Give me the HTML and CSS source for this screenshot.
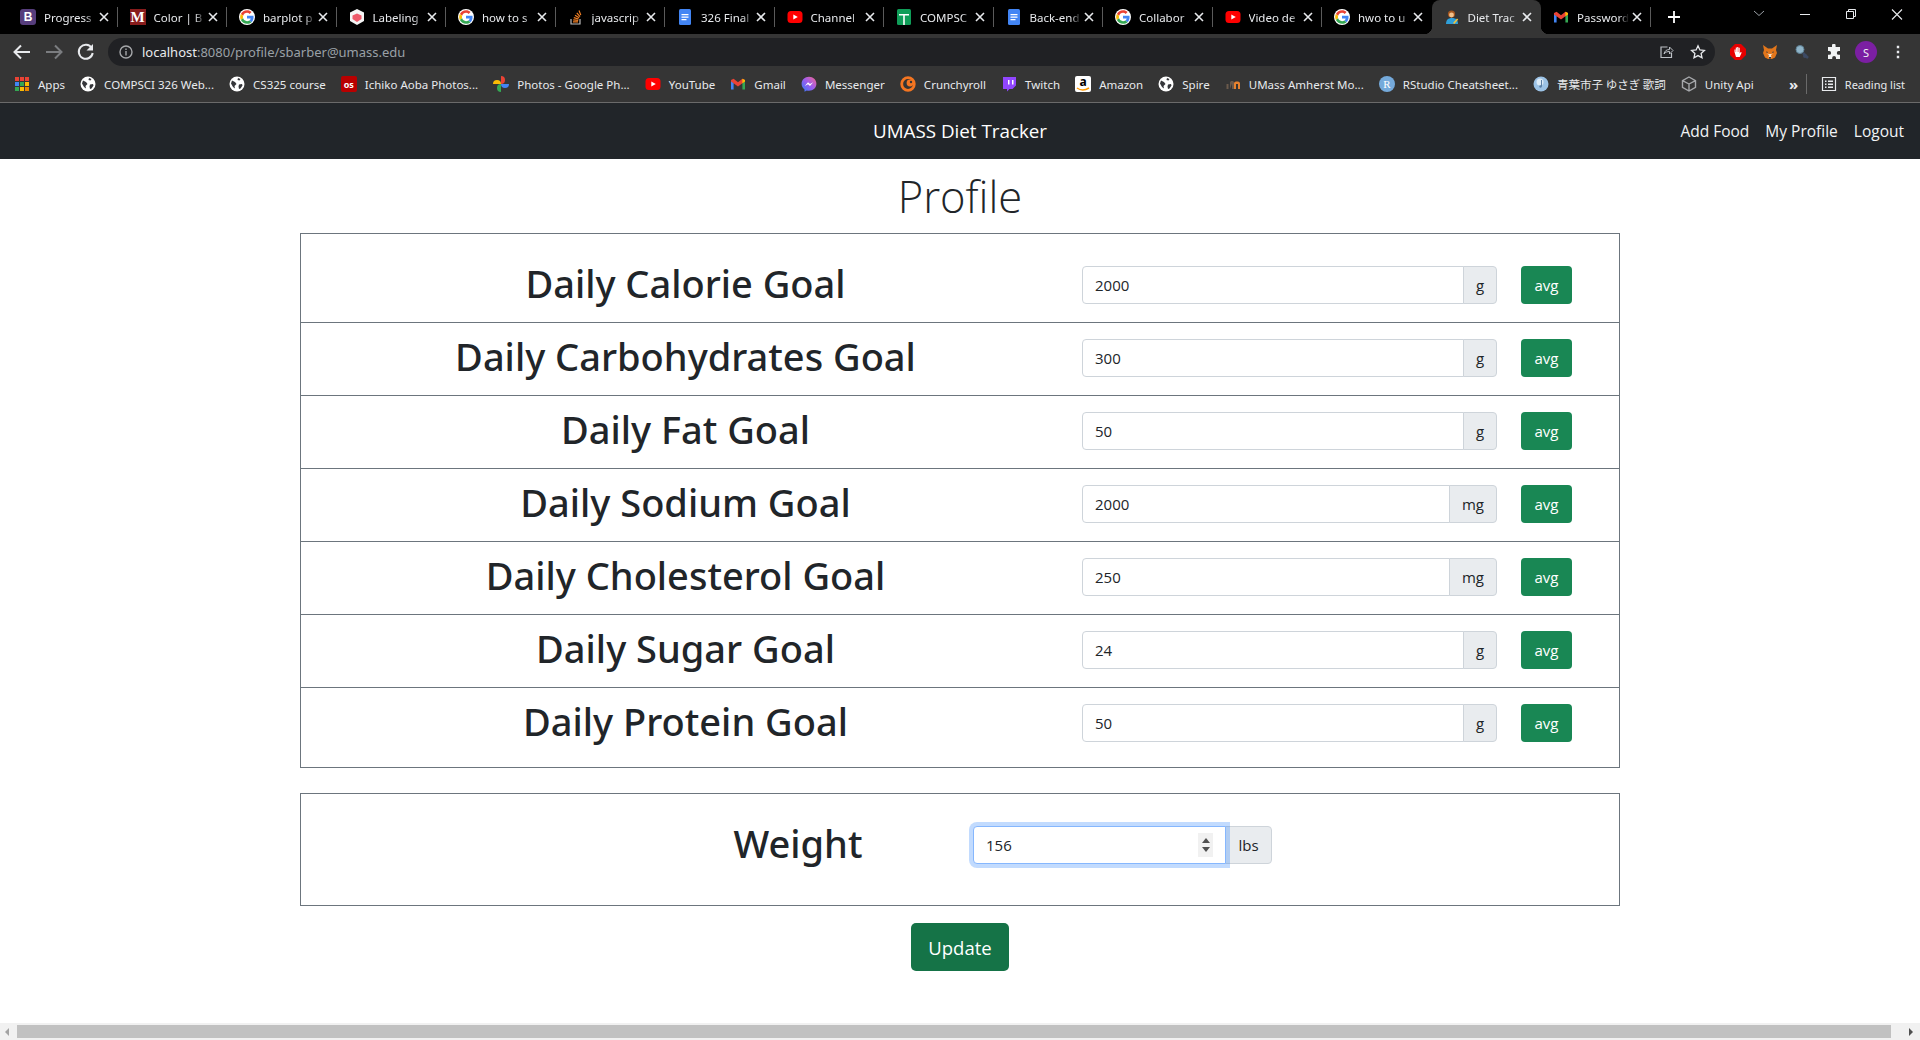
FILE: index.html
```html
<!DOCTYPE html>
<html lang="en">
<head>
    <meta charset="UTF-8">
    <meta name="viewport" content="width=device-width, initial-scale=1.0">
    <title>Diet Tracker</title>
    <link rel="stylesheet" href="styles.css">
</head>
<body>

    <svg class="defs" width="0" height="0">
        <symbol id="google" viewBox="-4 -4 56 56">
            <circle cx="24" cy="24" r="28" fill="#fff"/>
            <path fill="#EA4335" d="M24 9.5c3.54 0 6.71 1.22 9.21 3.6l6.85-6.85C35.9 2.38 30.47 0 24 0 14.62 0 6.51 5.38 2.56 13.22l7.98 6.19C12.43 13.72 17.74 9.5 24 9.5z"/>
            <path fill="#4285F4" d="M46.98 24.55c0-1.57-.15-3.09-.38-4.55H24v9.02h12.94c-.58 2.96-2.26 5.48-4.78 7.18l7.73 6c4.51-4.18 7.09-10.36 7.09-17.65z"/>
            <path fill="#FBBC05" d="M10.53 28.59c-.48-1.45-.76-2.99-.76-4.59s.27-3.14.76-4.59l-7.98-6.19C.92 16.46 0 20.12 0 24c0 3.88.92 7.54 2.56 10.78l7.97-6.19z"/>
            <path fill="#34A853" d="M24 48c6.48 0 11.93-2.13 15.89-5.81l-7.73-6c-2.15 1.45-4.92 2.3-8.16 2.3-6.26 0-11.57-4.22-13.47-9.91l-7.98 6.19C6.51 42.62 14.62 48 24 48z"/>
        </symbol>
        <symbol id="youtube" viewBox="0 0 16 16">
            <rect x="0.5" y="2" width="15" height="12" rx="3.5" fill="#f00"/>
            <path d="M6.3 5.4 10.8 8l-4.5 2.6z" fill="#fff"/>
        </symbol>
        <symbol id="docs" viewBox="0 0 16 16">
            <rect x="2" y="0" width="12" height="16" rx="1.5" fill="#4285f4"/>
            <path d="M4.5 5h7v1.2h-7zM4.5 7.5h7v1.2h-7zM4.5 10h5v1.2h-5z" fill="#fff"/>
        </symbol>
        <symbol id="globe" viewBox="0 0 16 16">
            <circle cx="8" cy="8" r="7.5" fill="#fff"/>
            <path d="M3 4.500 6 6l1.500 2L5.500 10 6 12.500 4 11 2 7.500zM9 2l2.500 1-1 1.500L8.500 4zM10 8.500l3-.5.500 1.500-2 3-1.500.5-.5-2.500z" fill="#35363a"/>
        </symbol>
        <symbol id="gmail" viewBox="0 0 16 16">
            <path d="M1 4v9.5h2.6V7.2z" fill="#4285f4"/>
            <path d="M15 4v9.5h-2.6V7.2z" fill="#34a853"/>
            <path d="M1 4 3.6 2.8 8 6.2l4.4-3.4L15 4v1.5L12.4 7.2 8 10.4 3.6 7.2 1 5.5z" fill="#ea4335"/>
            <path d="M12.4 2.8 15 4v1.5l-2.6 1.7z" fill="#fbbc05"/>
        </symbol>
        <symbol id="close" viewBox="0 0 16 16">
            <path d="M4 4l8 8M12 4l-8 8" stroke="#e8eaed" stroke-width="1.6" fill="none"/>
        </symbol>
    </svg>

    <div class="tabstrip">
        <div class="tab">
            <span class="fav fav-b">B</span>
            <span class="tab-title">Progress</span>
            <svg class="tab-close"><use href="#close"/></svg>
        </div>
        <div class="tab">
            <span class="fav fav-m">M</span>
            <span class="tab-title">Color | B</span>
            <svg class="tab-close"><use href="#close"/></svg>
        </div>
        <div class="tab">
            <svg class="fav"><use href="#google"/></svg>
            <span class="tab-title">barplot p</span>
            <svg class="tab-close"><use href="#close"/></svg>
        </div>
        <div class="tab">
            <svg class="fav" viewBox="0 0 16 16">
                <path d="M8 0 15 3.5V12L8 16 1 12V3.5z" fill="#f5f5f5"/>
                <path d="M8 4.5 12.5 6.5V10L8 13 3.5 10V6.5z" fill="#ee5a6a"/>
            </svg>
            <span class="tab-title">Labeling</span>
            <svg class="tab-close"><use href="#close"/></svg>
        </div>
        <div class="tab">
            <svg class="fav"><use href="#google"/></svg>
            <span class="tab-title">how to s</span>
            <svg class="tab-close"><use href="#close"/></svg>
        </div>
        <div class="tab">
            <svg class="fav" viewBox="0 0 16 16">
                <path d="M3 10v5h9v-5" stroke="#bcbbbb" stroke-width="1.2" fill="none"/>
                <path d="M5 12.8h5M5.2 10.8l5 .5M5.8 8.6l4.8 1.4M7 6.2l4.2 2.6M8.8 3.8l3.2 3.8M11 1.5l1.8 4.6" stroke="#f48024" stroke-width="1.2" fill="none"/>
            </svg>
            <span class="tab-title">javascrip</span>
            <svg class="tab-close"><use href="#close"/></svg>
        </div>
        <div class="tab">
            <svg class="fav"><use href="#docs"/></svg>
            <span class="tab-title">326 Final</span>
            <svg class="tab-close"><use href="#close"/></svg>
        </div>
        <div class="tab">
            <svg class="fav"><use href="#youtube"/></svg>
            <span class="tab-title">Channel</span>
            <svg class="tab-close"><use href="#close"/></svg>
        </div>
        <div class="tab">
            <svg class="fav" viewBox="0 0 16 16">
                <rect x="1" y="0" width="14" height="16" rx="1.5" fill="#0f9d58"/>
                <path d="M3 5h10v1.400H8.800V16H7.200V6.400H3z" fill="#fff"/>
            </svg>
            <span class="tab-title">COMPSC</span>
            <svg class="tab-close"><use href="#close"/></svg>
        </div>
        <div class="tab">
            <svg class="fav"><use href="#docs"/></svg>
            <span class="tab-title">Back-end</span>
            <svg class="tab-close"><use href="#close"/></svg>
        </div>
        <div class="tab">
            <svg class="fav"><use href="#google"/></svg>
            <span class="tab-title">Collabor</span>
            <svg class="tab-close"><use href="#close"/></svg>
        </div>
        <div class="tab">
            <svg class="fav"><use href="#youtube"/></svg>
            <span class="tab-title">Video de</span>
            <svg class="tab-close"><use href="#close"/></svg>
        </div>
        <div class="tab tab-noline">
            <svg class="fav"><use href="#google"/></svg>
            <span class="tab-title">hwo to u</span>
            <svg class="tab-close"><use href="#close"/></svg>
        </div>
        <div class="tab tab-active">
            <svg class="fav" viewBox="0 0 16 16">
                <path d="M2 15c0-4 2-6 6-6s6 2 6 6z" fill="#2f9fd8"/>
                <circle cx="7.5" cy="5" r="3.6" fill="#a5561f"/>
                <circle cx="7.5" cy="6" r="2.4" fill="#f3c18b"/>
                <path d="M9 14l4-4.5 1.2 1-4 4.5z" fill="#f5c33b"/>
            </svg>
            <span class="tab-title">Diet Trac</span>
            <svg class="tab-close"><use href="#close"/></svg>
        </div>
        <div class="tab">
            <svg class="fav"><use href="#gmail"/></svg>
            <span class="tab-title">Password</span>
            <svg class="tab-close"><use href="#close"/></svg>
        </div>
        <svg class="newtab" viewBox="0 0 16 16"><path d="M8 2v12M2 8h12" stroke="#fff" stroke-width="1.8"/></svg>
        <div class="window-controls">
            <svg class="win-btn" viewBox="0 0 46 16"><path d="M18 5l5 4.5L28 5" stroke="#9aa0a6" fill="none"/></svg>
            <svg class="win-btn" viewBox="0 0 46 16"><path d="M18 8.5h10" stroke="#e8eaed"/></svg>
            <svg class="win-btn" viewBox="0 0 46 16"><path d="M18.5 5.5h7v7h-7zM20.5 5.5v-2h7v7h-2" stroke="#e8eaed" fill="none"/></svg>
            <svg class="win-btn" viewBox="0 0 46 16"><path d="M18 3.5l10 10M28 3.5l-10 10" stroke="#e8eaed" stroke-width="1.1"/></svg>
        </div>
    </div>

    <div class="toolbar">
        <svg class="tool" viewBox="0 0 32 32"><path d="M24 16H9M15 9.500 8.500 16l6.500 6.500" stroke="#e8eaed" stroke-width="2" fill="none"/></svg>
        <svg class="tool" viewBox="0 0 32 32"><path d="M8 16h15M17 9.500l6.500 6.500-6.500 6.500" stroke="#7b7d80" stroke-width="2" fill="none"/></svg>
        <svg class="tool" viewBox="0 0 32 32"><path d="M21.700 12a7 7 0 1 0 1 5" stroke="#e8eaed" stroke-width="2" fill="none"/><path d="M23 8v6.500h-6.500z" fill="#e8eaed"/></svg>
        <div class="address">
            <svg class="info" viewBox="0 0 16 16">
                <circle cx="8" cy="8" r="6" stroke="#a6a8ab" stroke-width="1.400" fill="none"/>
                <path d="M7.300 7h1.400v4.500H7.300zM7.300 4.500h1.400v1.400H7.300z" fill="#a6a8ab"/>
            </svg>
            <span class="url"><span class="url-host">localhost</span>:8080/profile/sbarber@umass.edu</span>
            <svg class="addr-icon addr-share" viewBox="0 0 16 16">
                <path d="M9.500 3H3v10.500h10.500V9" stroke="#bdc1c6" stroke-width="1.200" fill="none"/>
                <path d="M6 10c.5-3 2.500-4.500 5.500-4.500V3L15 6.500 11.500 10V7.500C9.500 7.500 7.500 8 6 10z" stroke="#bdc1c6" fill="#202124"/>
            </svg>
            <svg class="addr-icon addr-star" viewBox="0 0 16 16">
                <path d="M8 1.800l1.900 4.100 4.500.5-3.300 3 .9 4.400L8 11.600l-4 2.200.9-4.400-3.300-3 4.500-.5z" stroke="#e8eaed" stroke-width="1.300" fill="none"/>
            </svg>
        </div>
        <div class="extensions">
            <svg class="ext" viewBox="0 0 16 16">
                <path d="M5 0h6l5 5v6l-5 5H5l-5-5V5z" fill="#e60000"/>
                <path d="M4.500 8V5.500h1V8h.3V3.500h1.100V8h.3V3h1.100v5h.3V3.800h1.100v5.700l1-1.500 1 .6-2 4.400H6z" fill="#fff"/>
            </svg>
            <svg class="ext" viewBox="0 0 16 16">
                <path d="M1 1l5 3.500h4L15 1l-1 5 1 3-2 4.500-3 1.500H6l-3-1.500L1 9l1-3z" fill="#e2761b"/>
                <path d="M5 9.500 7 11l-.5 2.500H9.500L9 11l2-1.500-2 .5H7z" fill="#f6e0c8"/>
                <path d="M4 7.500l2 .5-1 1zM12 7.500 10 8l1 1zM7 13h2v1.500H7z" fill="#233447"/>
            </svg>
            <svg class="ext" viewBox="0 0 16 16">
                <circle cx="6" cy="5.500" r="4" fill="#8fb4c8" stroke="#5e7f92"/>
                <path d="M9 9l5 5" stroke="#3d4a63" stroke-width="2.500"/>
                <circle cx="11" cy="12" r="2" fill="#3d4a63"/>
            </svg>
            <svg class="ext" viewBox="0 0 16 16">
                <path d="M6 1.500a1.800 1.800 0 0 1 3.600 0V3H14v4h-1.300a1.900 1.900 0 0 0 0 3.800H14V15H10v-1.200a1.900 1.900 0 0 0-3.800 0V15H2v-4.200h1.200a1.900 1.900 0 0 0 0-3.800H2V3h4z" fill="#f1f3f4"/>
            </svg>
            <span class="avatar">S</span>
            <svg class="ext" viewBox="0 0 16 16"><path d="M6.800 1.800h2.400v2.400H6.800zM6.800 6.800h2.400v2.400H6.800zM6.800 11.800h2.400v2.400H6.800z" fill="#e8eaed"/></svg>
        </div>
    </div>

    <div class="bookmarks">
        <div class="bm bm-apps">
            <svg class="bm-icon" viewBox="0 0 16 16">
                <path d="M1 1h4v4H1z" fill="#ea4335"/><path d="M6 1h4v4H6z" fill="#ea4335"/><path d="M11 1h4v4h-4z" fill="#ea4335"/>
                <path d="M1 6h4v4H1z" fill="#4285f4"/><path d="M6 6h4v4H6z" fill="#34a853"/><path d="M11 6h4v4h-4z" fill="#fbbc05"/>
                <path d="M1 11h4v4H1z" fill="#34a853"/><path d="M6 11h4v4H6z" fill="#fbbc05"/><path d="M11 11h4v4h-4z" fill="#ea8600"/>
            </svg>
            Apps
        </div>
        <div class="bm"><svg class="bm-icon"><use href="#globe"/></svg>COMPSCI 326 Web...</div>
        <div class="bm"><svg class="bm-icon"><use href="#globe"/></svg>CS325 course</div>
        <div class="bm"><span class="bm-icon bm-os">os</span>Ichiko Aoba Photos...</div>
        <div class="bm">
            <svg class="bm-icon" viewBox="0 0 16 16">
                <path d="M8 8V0a4 4 0 0 1 0 8z" fill="#ea4335"/>
                <path d="M8 8V0a4 4 0 0 1 0 8z" fill="#4285f4" transform="rotate(90 8 8)"/>
                <path d="M8 8V0a4 4 0 0 1 0 8z" fill="#34a853" transform="rotate(180 8 8)"/>
                <path d="M8 8V0a4 4 0 0 1 0 8z" fill="#fbbc05" transform="rotate(270 8 8)"/>
            </svg>
            Photos - Google Ph...
        </div>
        <div class="bm"><svg class="bm-icon"><use href="#youtube"/></svg>YouTube</div>
        <div class="bm"><svg class="bm-icon"><use href="#gmail"/></svg>Gmail</div>
        <div class="bm">
            <svg class="bm-icon" viewBox="0 0 16 16">
                <defs>
                    <linearGradient id="mess" x1="0" y1="1" x2="1" y2="0">
                        <stop offset="0" stop-color="#2f7cf6"/>
                        <stop offset="0.5" stop-color="#9b5cf0"/>
                        <stop offset="1" stop-color="#f4668c"/>
                    </linearGradient>
                </defs>
                <path d="M8 .8c4.200 0 7.400 3 7.400 7s-3.200 7-7.400 7c-.8 0-1.500-.1-2.200-.3L3.500 15.800v-2.300C1.700 12.200.6 10.200.6 7.800.6 3.800 3.800.8 8 .8z" fill="url(#mess)"/>
                <path d="M3.800 10 7 6.300l2 1.700 3.200-1.700L9 10 7 8.300z" fill="#fff"/>
            </svg>
            Messenger
        </div>
        <div class="bm">
            <svg class="bm-icon" viewBox="0 0 16 16">
                <circle cx="8" cy="8" r="6.300" fill="none" stroke="#f47521" stroke-width="2.800"/>
                <circle cx="10" cy="7" r="3.400" fill="#f47521"/>
                <circle cx="11" cy="6" r="1.200" fill="#35363a"/>
            </svg>
            Crunchyroll
        </div>
        <div class="bm">
            <svg class="bm-icon" viewBox="0 0 16 16">
                <path d="M2 1h13v8.500L11.500 13H8.500L6 15.500V13H2z" fill="#9146ff"/>
                <path d="M7 4h1.500v4.500H7zM11 4h1.500v4.500H11z" fill="#fff"/>
            </svg>
            Twitch
        </div>
        <div class="bm">
            <span class="bm-icon bm-amazon">a
                <svg class="smile" viewBox="0 0 16 5"><path d="M2 1c3.500 2.500 8 2.500 12 0" stroke="#f90" stroke-width="1.500" fill="none"/></svg>
            </span>
            Amazon
        </div>
        <div class="bm"><svg class="bm-icon"><use href="#globe"/></svg>Spire</div>
        <div class="bm">
            <svg class="bm-icon" viewBox="0 0 16 16">
                <path d="M1.500 13V8h2v5zM5 13V6.500C5 5.500 6 5 7 5s2 .5 2 1.500V13H7V7.500H7z" fill="#6b5a4c"/>
                <path d="M9 13V7.500C9 6 10.500 5.500 12 5.500s3 .5 3 2V13h-2V8h-2v5z" fill="#e8822e"/>
            </svg>
            UMass Amherst Mo...
        </div>
        <div class="bm"><span class="bm-icon bm-r">R</span>RStudio Cheatsheet...</div>
        <div class="bm">
            <svg class="bm-icon" viewBox="0 0 16 16">
                <circle cx="8" cy="8" r="7.500" fill="#9cc3e6"/>
                <circle cx="7" cy="6" r="3.500" fill="#dcebf7"/>
                <path d="M8.500 4v6.500" stroke="#5a7fa5"/>
                <circle cx="7.500" cy="10.500" r="1.200" fill="#5a7fa5"/>
            </svg>
            <span class="cjk">青葉市子 ゆさぎ 歌詞</span>
        </div>
        <div class="bm">
            <svg class="bm-icon" viewBox="0 0 16 16">
                <path d="M8 1 14.500 4.700v6.600L8 15l-6.500-3.700V4.700zM8 8l6.500-3.300M8 8 1.500 4.700M8 8v7" stroke="#a6a8ab" stroke-width="1.400" fill="none"/>
            </svg>
            Unity Api
        </div>
        <div class="bm-right">
            <span class="bm-more">»</span>
            <span class="bm-sep"></span>
            <div class="bm bm-reading">
                <svg class="bm-icon" viewBox="0 0 16 16">
                    <path d="M1.500 1.500h13v13h-13z" stroke="#e8eaed" stroke-width="1.200" fill="none"/>
                    <path d="M4 4.500h1.500V6H4zM7 4.500h5V6H7zM4 7.500h1.500V9H4zM7 7.500h5V9H7zM4 10.500h1.500V12H4zM7 10.500h5V12H7z" fill="#e8eaed"/>
                </svg>
                Reading list
            </div>
        </div>
    </div>

    <nav class="navbar">
        <span></span>
        <a class="brand">UMASS Diet Tracker</a>
        <div class="nav-links">
            <a class="nav-link">Add Food</a>
            <a class="nav-link">My Profile</a>
            <a class="nav-link">Logout</a>
        </div>
    </nav>

    <main class="content">
        <h1 class="title">Profile</h1>

        <div class="goals">
            <div class="goal-row">
                <h2 class="goal-name">Daily Calorie Goal</h2>
                <div class="input-group">
                    <input class="form-control" type="text" value="2000">
                    <span class="unit unit-g">g</span>
                </div>
                <button class="btn-avg">avg</button>
            </div>
            <div class="goal-row">
                <h2 class="goal-name">Daily Carbohydrates Goal</h2>
                <div class="input-group">
                    <input class="form-control" type="text" value="300">
                    <span class="unit unit-g">g</span>
                </div>
                <button class="btn-avg">avg</button>
            </div>
            <div class="goal-row">
                <h2 class="goal-name">Daily Fat Goal</h2>
                <div class="input-group">
                    <input class="form-control" type="text" value="50">
                    <span class="unit unit-g">g</span>
                </div>
                <button class="btn-avg">avg</button>
            </div>
            <div class="goal-row">
                <h2 class="goal-name">Daily Sodium Goal</h2>
                <div class="input-group">
                    <input class="form-control" type="text" value="2000">
                    <span class="unit unit-mg">mg</span>
                </div>
                <button class="btn-avg">avg</button>
            </div>
            <div class="goal-row">
                <h2 class="goal-name">Daily Cholesterol Goal</h2>
                <div class="input-group">
                    <input class="form-control" type="text" value="250">
                    <span class="unit unit-mg">mg</span>
                </div>
                <button class="btn-avg">avg</button>
            </div>
            <div class="goal-row">
                <h2 class="goal-name">Daily Sugar Goal</h2>
                <div class="input-group">
                    <input class="form-control" type="text" value="24">
                    <span class="unit unit-g">g</span>
                </div>
                <button class="btn-avg">avg</button>
            </div>
            <div class="goal-row">
                <h2 class="goal-name">Daily Protein Goal</h2>
                <div class="input-group">
                    <input class="form-control" type="text" value="50">
                    <span class="unit unit-g">g</span>
                </div>
                <button class="btn-avg">avg</button>
            </div>
        </div>

        <div class="weight-box">
            <h2 class="weight-name">Weight</h2>
            <div class="weight-group">
                <div class="weight-field">
                    <input class="form-control focused" type="text" value="156">
                    <span class="spinner">
                        <i class="spin-up"></i>
                        <i class="spin-down"></i>
                    </span>
                </div>
                <span class="unit unit-lbs">lbs</span>
            </div>
        </div>

        <div class="actions">
            <button class="btn-update">Update</button>
        </div>
    </main>

    <div class="h-scroll">
        <i class="arrow-left"></i>
        <div class="thumb"></div>
        <i class="arrow-right"></i>
    </div>

</body>
</html>
```

FILE: styles.css
```css
* {
    box-sizing: border-box;
}

body {
    margin: 0;
    height: 100vh;
    overflow: hidden;
    display: flex;
    flex-direction: column;
    background: #fff;
    color: #212529;
    font-family: "Open Sans", "Noto Sans", sans-serif;
}

.defs {
    position: absolute;
}

/* browser chrome */
.tabstrip {
    display: flex;
    align-items: center;
    flex: none;
    height: 34px;
    padding-left: 8px;
    background: #000;
    font-family: "Noto Sans", sans-serif;
    font-size: 11.5px;
    color: #e8eaed;
}

.tab {
    position: relative;
    display: flex;
    align-items: center;
    flex: none;
    width: 109.5px;
    height: 34px;
    padding: 0 6px 0 12px;
}

.tab::after {
    content: "";
    position: absolute;
    right: 0;
    top: 7px;
    height: 20px;
    width: 1px;
    background: #5a5a5a;
}

.tab-noline::after {
    display: none;
}

.tab-active {
    background: #353535;
    border-radius: 8px 8px 0 0;
}

.tab-active::before,
.tab-active::after {
    content: "";
    position: absolute;
    top: auto;
    bottom: 0;
    width: 8px;
    height: 8px;
}

.tab-active::before {
    left: -8px;
    background: radial-gradient(circle at 0 0, transparent 8px, #353535 8.5px);
}

.tab-active::after {
    right: -8px;
    background: radial-gradient(circle at 100% 0, transparent 8px, #353535 8.5px);
}

.fav {
    flex: none;
    width: 16px;
    height: 16px;
}

.fav-b {
    display: flex;
    align-items: center;
    justify-content: center;
    border-radius: 3px;
    background: #563d7c;
    color: #fff;
    font-family: "Liberation Sans", sans-serif;
    font-weight: bold;
    font-size: 12px;
}

.fav-m {
    display: flex;
    align-items: center;
    justify-content: center;
    background: #881c1c;
    color: #fff;
    font-family: "Liberation Serif", serif;
    font-weight: bold;
    font-size: 15px;
}

.tab-title {
    flex: 1;
    min-width: 0;
    margin-left: 8px;
    white-space: nowrap;
    overflow: hidden;
    -webkit-mask-image: linear-gradient(to right, #000 80%, transparent 100%);
    mask-image: linear-gradient(to right, #000 80%, transparent 100%);
}

.tab-close {
    flex: none;
    width: 16px;
    height: 16px;
}

.newtab {
    flex: none;
    width: 16px;
    height: 16px;
    margin-left: 15px;
}

.window-controls {
    display: flex;
    margin-left: auto;
}

.win-btn {
    width: 46px;
    height: 16px;
    margin-bottom: 6px;
}

.toolbar {
    display: flex;
    align-items: center;
    flex: none;
    height: 34px;
    padding: 2px 6px 0 6px;
    background: #353535;
}

.tool {
    flex: none;
    width: 32px;
    height: 32px;
}

.address {
    display: flex;
    align-items: center;
    flex: 1;
    height: 28px;
    margin: 0 7px 0 6px;
    padding-left: 10px;
    border-radius: 14px;
    background: #202124;
    font-family: "Noto Sans", sans-serif;
    font-size: 13px;
    color: #9aa0a6;
}

.info {
    flex: none;
    width: 16px;
    height: 16px;
}

.url {
    flex: 1;
    margin-left: 8px;
}

.url-host {
    color: #e8eaed;
}

.addr-icon {
    flex: none;
    width: 16px;
    height: 16px;
}

.addr-star {
    margin: 0 9px 0 16px;
}

.extensions {
    display: flex;
    align-items: center;
}

.ext {
    flex: none;
    width: 32px;
    height: 16px;
}

.avatar {
    display: flex;
    align-items: center;
    justify-content: center;
    width: 22px;
    height: 22px;
    margin: 0 5px;
    border-radius: 50%;
    background: #7b1fa2;
    color: #f1f3f4;
    font-family: "Noto Sans", sans-serif;
    font-size: 11px;
}

.bookmarks {
    display: flex;
    align-items: center;
    flex: none;
    height: 35px;
    padding: 0 0 2px 7px;
    background: #353535;
    border-bottom: 1px solid #6a6a6a;
    font-family: "Noto Sans", sans-serif;
    font-size: 11.5px;
    color: #e8eaed;
    white-space: nowrap;
}

.bm {
    display: flex;
    align-items: center;
    flex: none;
    padding: 0 9.1px 0 6px;
}

.bm-apps {
    padding-left: 7px;
}

.bm-icon {
    flex: none;
    width: 16px;
    height: 16px;
    margin-right: 8px;
}

.bm-os {
    display: flex;
    align-items: center;
    justify-content: center;
    border-radius: 2px;
    background: #b90000;
    color: #fff;
    font-size: 9px;
    font-weight: 700;
    line-height: 1;
}

.bm-amazon {
    position: relative;
    display: flex;
    justify-content: center;
    border-radius: 2px;
    background: #fff;
    color: #000;
    font-size: 12px;
    font-weight: 700;
    line-height: 12px;
}

.smile {
    position: absolute;
    left: 0;
    bottom: 0;
    width: 16px;
    height: 5px;
}

.bm-r {
    display: flex;
    align-items: center;
    justify-content: center;
    border-radius: 50%;
    background: #75aadb;
    color: #fff;
    font-family: "Liberation Serif", serif;
    font-size: 11px;
}

.cjk {
    font-family: "Noto Sans CJK JP", sans-serif;
}

.bm-right {
    display: flex;
    align-items: center;
    margin-left: auto;
}

.bm-more {
    font-size: 15px;
    font-weight: 700;
    line-height: 1;
}

.bm-sep {
    width: 1px;
    height: 20px;
    margin: 0 7.5px 0 8px;
    background: #6a6a6a;
}

.bm-reading {
    padding-right: 15px;
    font-size: 11px;
}

/* site navbar */
.navbar {
    display: grid;
    grid-template-columns: 1fr auto 1fr;
    align-items: center;
    flex: none;
    height: 56px;
    padding: 0 16px;
    background: #212529;
    color: #f8f9fa;
}

.brand {
    font-size: 18.800px;
    color: #fff;
}

.nav-links {
    display: flex;
    justify-content: flex-end;
    gap: 16px;
}

.nav-link {
    font-size: 15.500px;
    color: #f1f3f5;
}

.content {
    flex: 1;
    min-height: 0;
    padding: 0 300px;
}

.title {
    margin: 0;
    height: 74px;
    padding-top: 9px;
    font-size: 43.500px;
    font-weight: 300;
    line-height: 58px;
    text-align: center;
}

.goals {
    padding: 16px 0 7px;
    border: 1px solid #6c757d;
}

.goal-row {
    display: grid;
    grid-template-columns: 769px 439px 1fr;
    height: 73px;
    padding-top: 16px;
    border-bottom: 1px solid #6c757d;
}

.goal-row:last-child {
    height: 72px;
    border-bottom: none;
}

.goal-name {
    margin: -7px 0 0;
    font-family: "Noto Sans", sans-serif;
    font-size: 38px;
    font-weight: 500;
    line-height: 48px;
    text-align: center;
}

.input-group {
    display: flex;
    height: 38px;
    margin-left: 12px;
    margin-right: 12px;
}

.form-control {
    flex: 1;
    width: 100%;
    min-width: 0;
    height: 38px;
    padding: 0 12px;
    border: 1px solid #ced4da;
    border-radius: 4px 0 0 4px;
    outline: none;
    color: #212529;
    font-family: "Open Sans", sans-serif;
    font-size: 15px;
}

.unit {
    display: flex;
    align-items: center;
    justify-content: center;
    flex: none;
    height: 38px;
    margin-left: -1px;
    border: 1px solid #ced4da;
    border-radius: 0 4px 4px 0;
    background: #e9ecef;
    font-size: 15px;
}

.unit-g {
    width: 34px;
}

.unit-mg {
    width: 48px;
}

.unit-lbs {
    width: 47px;
}

.btn-avg {
    width: 51px;
    height: 38px;
    margin-left: 12px;
    padding: 0;
    border: none;
    border-radius: 4px;
    background: #198754;
    color: #fff;
    font-family: "Open Sans", sans-serif;
    font-size: 15px;
}

.weight-box {
    display: flex;
    height: 113px;
    margin-top: 25px;
    padding: 32px 0 0 329px;
    border: 1px solid #6c757d;
}

.weight-name {
    flex: none;
    width: 336px;
    margin: -7px 0 0;
    font-family: "Noto Sans", sans-serif;
    font-size: 38px;
    font-weight: 500;
    line-height: 48px;
    text-align: center;
}

.weight-group {
    display: flex;
    height: 38px;
    margin-left: 7px;
}

.weight-field {
    position: relative;
    width: 253px;
    z-index: 1;
}

.focused {
    border-color: #86b7fe;
    box-shadow: 0 0 0 4px rgba(13, 110, 253, 0.25);
}

.spinner {
    position: absolute;
    top: 7px;
    right: 13px;
    display: flex;
    flex-direction: column;
    align-items: center;
    justify-content: center;
    gap: 4px;
    width: 15px;
    height: 24px;
    background: #f1f1f1;
}

.spin-up {
    border-left: 4px solid transparent;
    border-right: 4px solid transparent;
    border-bottom: 5px solid #505050;
}

.spin-down {
    border-left: 4px solid transparent;
    border-right: 4px solid transparent;
    border-top: 5px solid #505050;
}

.actions {
    display: flex;
    justify-content: center;
    margin-top: 17px;
}

.btn-update {
    width: 98px;
    height: 48px;
    padding: 0;
    border: none;
    border-radius: 5px;
    background: #157347;
    color: #fff;
    font-family: "Open Sans", sans-serif;
    font-size: 18.500px;
}

/* fake page scrollbar */
.h-scroll {
    display: flex;
    align-items: center;
    flex: none;
    height: 17px;
    background: #f1f1f1;
}

.thumb {
    flex: none;
    width: 1874px;
    height: 13px;
    background: #c1c1c1;
}

.arrow-left {
    width: 0;
    height: 0;
    margin: 0 8px 0 5px;
    border-top: 4px solid transparent;
    border-bottom: 4px solid transparent;
    border-right: 4px solid #a3a3a3;
}

.arrow-right {
    width: 0;
    height: 0;
    margin-left: 18px;
    border-top: 4px solid transparent;
    border-bottom: 4px solid transparent;
    border-left: 4px solid #505050;
}
```
